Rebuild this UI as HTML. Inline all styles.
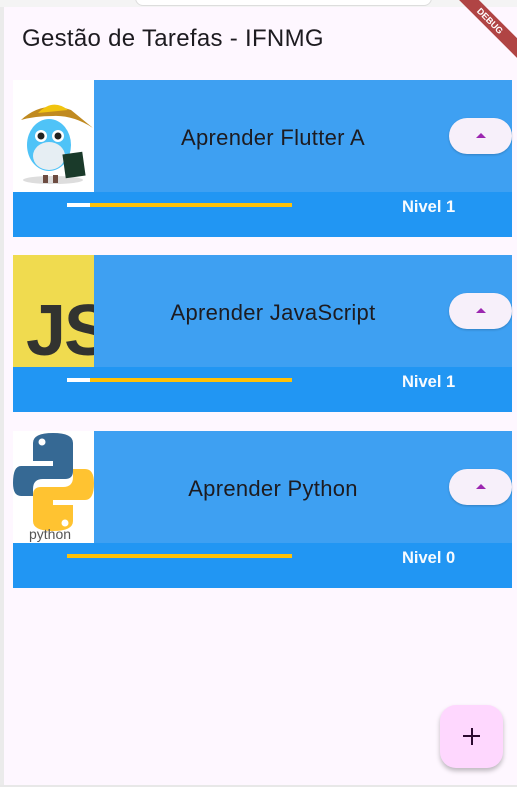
<!DOCTYPE html>
<html><head><meta charset="utf-8"><style>
body{margin:0;width:517px;height:787px;background:#fef7ff;font-family:"Liberation Sans",sans-serif;position:relative;overflow:hidden}
.ls{position:absolute;left:0;top:0;width:4px;height:787px;background:#ebebeb}
.tb{position:absolute;left:0;top:0;width:517px;height:7px;background:#f4f4f4}
.tb div{position:absolute;left:135px;top:-10px;width:295px;height:14px;border:1px solid #ddd;border-radius:8px;background:#fff}
.bl{position:absolute;left:0;top:785px;width:517px;height:2px;background:#e8e8e8}
h1{position:absolute;left:22px;top:25px;margin:0;font-weight:normal;font-size:24px;letter-spacing:0.3px;color:#1d1b20}
.card{position:absolute;left:13px;width:499px;height:157px}
.top{position:absolute;left:0;top:0;width:499px;height:112px;background:#3ea0f2}
.bot{position:absolute;left:0;top:112px;width:499px;height:45px;background:#2196f3}
.img{position:absolute;left:0;top:0;width:81px;height:112px;overflow:hidden}
.t{position:absolute;left:81px;right:60px;top:2px;height:112px;line-height:112px;text-align:center;font-size:22px;letter-spacing:0.3px;color:#1d1b20}
.btn{position:absolute;left:436px;top:38px;width:63px;height:36px;border-radius:18px;background:#f7f0fa;box-shadow:0 1px 2px rgba(0,0,0,.2)}
.btn:after{content:"";position:absolute;left:27px;top:15px;border-left:5px solid transparent;border-right:5px solid transparent;border-bottom:5px solid #9c27b0}
.bar{position:absolute;left:54px;top:11px;width:225px;height:4px;background:#ffc107}
.bar i{position:absolute;left:0;top:0;height:4px;background:#fff}
.nv{position:absolute;left:389px;top:6px;color:#fff;font-size:16.5px;font-weight:bold;opacity:.97}
.fab{position:absolute;left:440px;top:705px;width:63px;height:63px;border-radius:16px;background:#fed7fe;box-shadow:0 3px 5px rgba(0,0,0,.25)}
.fab:before{content:"";position:absolute;left:23px;top:30px;width:17px;height:2px;background:#2b0a2f}
.fab:after{content:"";position:absolute;left:30.5px;top:23px;width:2px;height:17px;background:#2b0a2f}
.debug{position:absolute;right:-28px;top:14px;width:110px;height:14px;background:#b04444;transform:rotate(45deg);color:#fff;font-size:9px;font-weight:bold;text-align:center;line-height:14px}
</style></head><body>
<div class="ls"></div><div class="tb"><div></div></div><div class="bl"></div>
<h1>Gestão de Tarefas - IFNMG</h1>
<div class="debug">DEBUG</div>

<div class="card" style="top:80px">
<div class="top"></div><div class="bot"><div class="bar"><i style="width:23px"></i></div><div class="nv">Nivel 1</div></div>
<div class="img" style="background:#fff"><svg width="81" height="112">
<ellipse cx="40" cy="100" rx="30" ry="4" fill="#ddd"/>
<ellipse cx="36" cy="65" rx="22" ry="26" fill="#4fc3f7"/>
<ellipse cx="36" cy="76" rx="16" ry="14" fill="#e6eef3"/>
<path d="M8 40 Q30 20 58 30 L80 48 Q60 35 40 36 Q22 36 8 40Z" fill="#c08a20"/>
<path d="M25 33 Q40 18 55 30Z" fill="#f1c40f"/>
<circle cx="28" cy="56" r="6" fill="#fff"/><circle cx="45" cy="56" r="6" fill="#fff"/>
<circle cx="28" cy="56" r="3.5" fill="#222"/><circle cx="45" cy="56" r="3.5" fill="#222"/>
<rect x="51" y="73" width="20" height="24" fill="#1a3a2a" transform="rotate(-8 61 85)"/>
<rect x="30" y="95" width="5" height="8" fill="#6d4c41"/><rect x="40" y="95" width="5" height="8" fill="#6d4c41"/>
</svg></div>
<div class="t">Aprender Flutter A</div><div class="btn"></div></div>

<div class="card" style="top:255px">
<div class="top"></div><div class="bot"><div class="bar"><i style="width:23px"></i></div><div class="nv">Nivel 1</div></div>
<div class="img" style="background:#f0db4f"><div style="position:absolute;left:13px;top:40px;font-size:72px;font-weight:bold;color:#323330;line-height:72px;letter-spacing:-2px">JS</div></div>
<div class="t">Aprender JavaScript</div><div class="btn"></div></div>

<div class="card" style="top:431px">
<div class="top"></div><div class="bot"><div class="bar"></div><div class="nv">Nivel 0</div></div>
<div class="img" style="background:#fff"><svg width="81" height="112">
<path d="M20 12 Q20 2 40 2 Q60 2 60 12 V40 Q60 48 52 48 H30 Q20 48 20 58 V65 H8 Q0 65 0 52 Q0 35 8 35 H40 V30 H20Z" fill="#366994"/>
<path d="M60 90 Q60 100 40 100 Q20 100 20 90 V64 Q20 56 28 56 H50 Q60 56 60 46 V38 H72 Q81 38 81 52 Q81 69 72 69 H40 V74 H60Z" fill="#ffc331"/>
<circle cx="29" cy="11" r="3.5" fill="#fff"/><circle cx="52" cy="92" r="3.5" fill="#fff"/>
<text x="16" y="108" font-size="14" fill="#555" font-family="Liberation Sans">python</text>
</svg></div>
<div class="t">Aprender Python</div><div class="btn"></div></div>

<div class="fab"></div>
</body></html>
